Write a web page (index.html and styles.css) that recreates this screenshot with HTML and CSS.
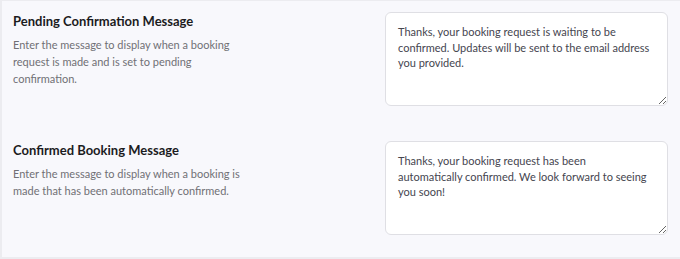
FILE: index.html
```html
<!DOCTYPE html>
<html>
<head>
<meta charset="utf-8">
<link rel="stylesheet" href="styles.css">
</head>
<body>
<div class="panel">
  <div class="row">
    <div class="info">
      <div class="title">Pending Confirmation Message</div>
      <div class="desc">Enter the message to display when a booking request is made and is set to pending confirmation.</div>
    </div>
    <textarea class="field">Thanks, your booking request is waiting to be confirmed. Updates will be sent to the email address you provided.</textarea>
  </div>
  <div class="row">
    <div class="info">
      <div class="title">Confirmed Booking Message</div>
      <div class="desc">Enter the message to display when a booking is made that has been automatically confirmed.</div>
    </div>
    <textarea class="field">Thanks, your booking request has been automatically confirmed. We look forward to seeing you soon!</textarea>
  </div>
</div>
</body>
</html>
```

FILE: styles.css
```css
html, body {
  margin: 0;
  padding: 0;
  background: #f8f8fc;
}
body {
  font-family: Lato, "Noto Sans", sans-serif;
  width: 680px;
  height: 259px;
  overflow: hidden;
}
.panel {
  box-sizing: border-box;
  width: 680px;
  height: 259px;
  border-top: 1px solid #ececf0;
  border-left: 2px solid #ececf0;
  border-bottom: 2px solid #ececf0;
  background: #f8f8fc;
  padding: 11px 12px 0 11px;
  display: flex;
  flex-direction: column;
  gap: 35px;
}
.row {
  display: flex;
  justify-content: space-between;
  align-items: flex-start;
}
.info {
  width: 240px;
  padding-top: 1px;
}
.title {
  font-size: 13px;
  font-weight: 700;
  color: #1c1c1e;
  line-height: 16px;
  margin-bottom: 7px;
}
.desc {
  font-size: 11px;
  color: #707075;
  line-height: 17px;
}
.field {
  box-sizing: border-box;
  width: 283px;
  height: 94px;
  margin: 0;
  border: 1px solid #dfdfe4;
  border-radius: 6px;
  background: #fff;
  padding: 11px 16px 11px 12px;
  font-family: Lato, "Noto Sans", sans-serif;
  font-size: 11px;
  line-height: 15.5px;
  color: #45454f;
  resize: vertical;
  outline: none;
}
```
